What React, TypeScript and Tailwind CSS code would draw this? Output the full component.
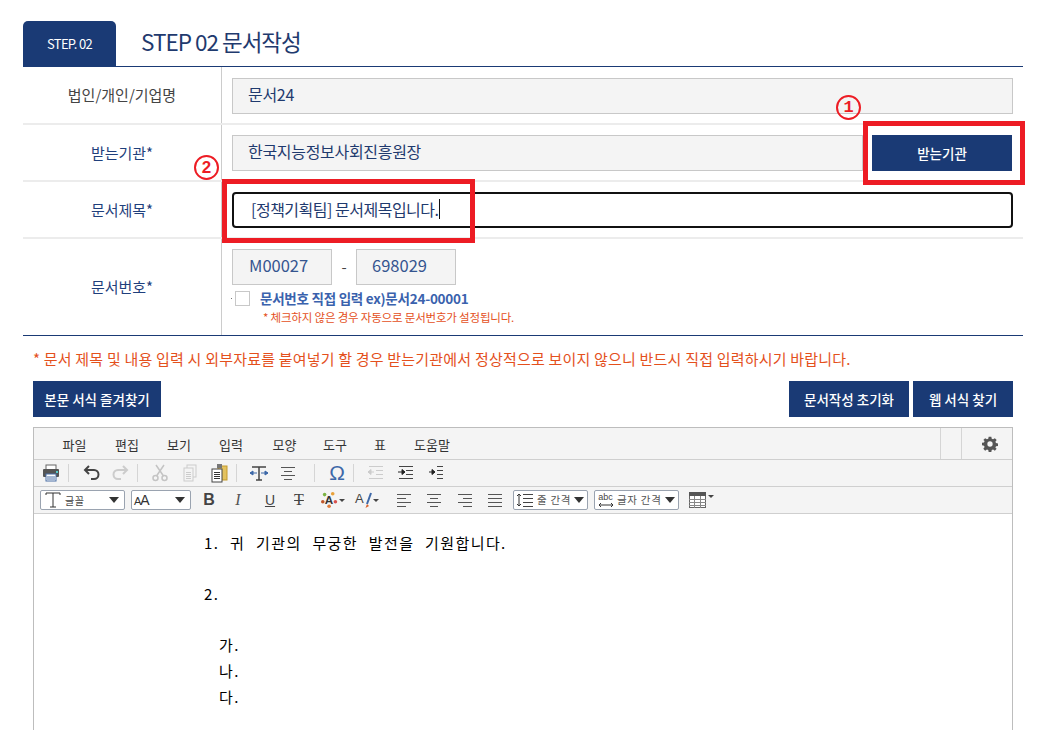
import React from "react";

const KR = "font-['Noto_Sans_CJK_KR','Noto_Sans',sans-serif]";

const Sep = () => <div className="w-px h-[18px] bg-[#d5d5d5] shrink-0" />;

function Ico({ cls, children }: { cls: string; children: React.ReactNode }) {
  return (
    <div className={`w-6 h-5 flex items-center justify-center shrink-0 ${cls}`}>
      <svg width="20" height="20" viewBox="0 0 20 20">{children}</svg>
    </div>
  );
}

const Lines = ({ c, l }: { c: string; l: number[][] }) => (
  <g stroke={c} strokeWidth="1" shapeRendering="crispEdges">
    {l.map((p, i) => (
      <line key={i} x1={p[0]} x2={p[1]} y1={p[2]} y2={p[2]} />
    ))}
  </g>
);

const Caret = ({ cls }: { cls: string }) => (
  <span className={`w-0 h-0 border-l-[5px] border-r-[5px] border-t-[6px] border-l-transparent border-r-transparent border-t-[#333] shrink-0 ${cls}`} />
);

function Field({ children, cls }: { children: React.ReactNode; cls: string }) {
  return (
    <div className={`h-9 flex items-center bg-[#f4f4f4] border border-[#c8c8c8] ${cls}`}>
      {children}
    </div>
  );
}

function Row({ label, h, children, blue, lc }: { label: string; h: string; children: React.ReactNode; blue?: boolean; lc?: string }) {
  return (
    <div className={`flex ${h}`}>
      <div className={`w-[198px] shrink-0 flex items-center justify-center text-[15px] ${lc ?? ""} ${blue ? "text-[#1f3f7c]" : "text-[#444]"}`}>{label}</div>
      <div className="flex-1 border-l border-[#cccccc] pl-[10px] pr-[10px]">{children}</div>
    </div>
  );
}

function NavyBtn({ children, cls }: { children: React.ReactNode; cls: string }) {
  return (
    <div className={`h-9 bg-[#1a3a75] text-white text-[13.5px] font-medium flex items-center justify-center ${cls}`}>{children}</div>
  );
}

const MENU: [string, string][] = [
  ["파일", "w-[53px]"],
  ["편집", "w-[52px]"],
  ["보기", "w-[52px]"],
  ["입력", "w-[52px]"],
  ["모양", "w-[55px]"],
  ["도구", "w-[46px]"],
  ["표", "w-[44px]"],
  ["도움말", "w-[60px]"],
];

export default function App() {
  return (
    <div className={`relative w-[1039px] h-[730px] overflow-hidden bg-white ${KR}`}>
      <div className="pl-[23px] pr-4 pt-[21px]">
        {/* heading */}
        <div className="flex items-stretch h-[46px] border-b-[1.5px] border-[#1a3a75]">
          <div className="w-[93px] bg-[#1a3a75] rounded-t-[5px] flex items-center justify-center text-white text-[13px] tracking-[-0.7px]">STEP. 02</div>
          <div className="ml-[25px] flex items-center text-[#1f3a6e] text-[22.5px] tracking-[-1px] pb-[3px]">STEP 02 문서작성</div>
        </div>

        {/* form */}
        <div className="border-b border-[#1a3a75]">
          <div className="border-b-2 border-[#ececec]">
            <Row label="법인/개인/기업명" h="h-[56px]">
              <div className="pt-[11px]"><Field cls="pl-[15px] pb-[4px] text-[16px] tracking-[-0.3px] text-[#1f3a6e]">문서24</Field></div>
            </Row>
          </div>
          <div className="border-b-2 border-[#ececec]">
            <Row label="받는기관*" h="h-[55px]" blue lc="pt-[2px]">
              <div className="pt-[10px] flex">
                <Field cls="pl-[15px] pb-[5px] w-[631px] text-[16px] tracking-[-0.3px] text-[#1f3a6e]">한국지능정보사회진흥원장</Field>
                <NavyBtn cls="ml-[9px] w-[140px]">받는기관</NavyBtn>
              </div>
            </Row>
          </div>
          <div className="border-b-2 border-[#ececec]">
            <Row label="문서제목*" h="h-[55px]" blue lc="pt-[2px]">
              <div className="pt-[10px]">
                <div className="h-9 flex items-center border-2 border-[#111] rounded-[4px] pl-[17px] pb-[3px] text-[16px] text-[#1f3a6e] tracking-[-0.5px]">
                  [정책기획팀] 문서제목입니다.<span className="w-px h-5 bg-[#111]" />
                </div>
              </div>
            </Row>
          </div>
          <Row label="문서번호*" h="h-[96px]" blue>
            <div className="pt-[10px] flex items-center">
              <Field cls="w-[100px] pl-[16px] pb-[3px] text-[16.5px] text-[#34558f]">M00027</Field>
              <span className="w-[24px] text-center text-[#444] text-[15px]">-</span>
              <Field cls="w-[100px] pl-[15px] pb-[3px] text-[16.5px] text-[#34558f]">698029</Field>
            </div>
            <div className="relative flex items-center mt-[6px] ml-[3px]">
              <div className="absolute left-[-4px] top-[7px] w-px h-px bg-[#777]" />
              <div className="w-[15px] h-[15px] border border-[#c8c8c8] bg-white" />
              <span className="ml-[10px] text-[13.5px] font-bold text-[#3a62ad] tracking-[-0.25px] leading-[15px]">문서번호 직접 입력 ex)문서24-00001</span>
            </div>
            <div className="ml-[31px] mt-[4px] text-[11.5px] leading-[15px] text-[#e4501c] tracking-[-0.19px]">* 체크하지 않은 경우 자동으로 문서번호가 설정됩니다.</div>
          </Row>
        </div>

        <div className="ml-[10px] mt-[12px] text-[15px] leading-[21px] text-[#e4501c] tracking-[0.2px] whitespace-nowrap">* 문서 제목 및 내용 입력 시 외부자료를 붙여넣기 할 경우 받는기관에서 정상적으로 보이지 않으니 반드시 직접 입력하시기 바랍니다.</div>

        <div className="ml-[10px] mr-[10px] mt-[12px] flex">
          <NavyBtn cls="w-[128px]">본문 서식 즐겨찾기</NavyBtn>
          <div className="flex-1" />
          <NavyBtn cls="w-[120px]">문서작성 초기화</NavyBtn>
          <NavyBtn cls="ml-1 w-[100px]">웹 서식 찾기</NavyBtn>
        </div>

        {/* editor */}
        <div className="ml-[10px] mr-[10px] mt-[10px] border border-[#bdbdbd] border-b-0 h-[320px]">
          <div className="h-[32px] bg-[#f4f4f4] border-b border-[#cfcfcf] flex items-center text-[13px] text-[#333]">
            <div className="flex pl-[14px] pt-[3px] flex-1">
              {MENU.map(([t, w]) => (
                <div key={t} className={`${w} text-center`}>{t}</div>
              ))}
            </div>
            <div className="w-[21px] h-full border-l border-[#d5d5d5]" />
            <div className="w-[51px] h-full border-l border-[#d5d5d5] pl-[6px] flex items-center justify-center">
              <svg width="16" height="16" viewBox="0 0 24 24" fill="#555">
                <path fillRule="evenodd" d="M10 1h4l.6 3.2 2 .8L19.300 3.200 22 6l-1.900 2.600.9 2 3 .5v3.800l-3 .6-.9 2L22 19.100 19.300 22l-2.700-1.900-2 .9-.6 3h-4l-.6-3-2-.9L4.700 22 2 19.100l1.900-2.600-.9-2-3-.6v-3.800l3-.5.9-2L2 6l2.700-2.800L7.400 5l2-.8zM12 8a4 4 0 100 8 4 4 0 000-8z" />
              </svg>
            </div>
          </div>

          <div className="h-[27px] bg-[#f4f4f4] border-b border-[#cfcfcf] flex items-center">
            <Ico cls="ml-[5px] mr-[5px]">
              <rect x="5" y="2" width="10" height="5" fill="#fff" stroke="#666" />
              <rect x="2" y="6" width="16" height="8" rx="1" fill="#555" />
              <rect x="15" y="8" width="2" height="2" fill="#5cc" />
              <rect x="5" y="11" width="10" height="7" fill="#fff" stroke="#4a6fa5" />
              <line x1="6" x2="14" y1="14" y2="14" stroke="#4a6fa5" />
              <line x1="6" x2="14" y1="16" y2="16" stroke="#4a6fa5" />
            </Ico>
            <Sep />
            <Ico cls="ml-[11px]">
              <path d="M7 3 3 7l4 4M3 7h9a4.500 4.500 0 010 9H9" fill="none" stroke="#444" strokeWidth="2" />
            </Ico>
            <Ico cls="ml-1">
              <path d="M13 3l4 4-4 4M17 7H8a4.500 4.500 0 000 9h3" fill="none" stroke="#ccc" strokeWidth="2" />
            </Ico>
            <div className="ml-[5px]"><Sep /></div>
            <Ico cls="ml-[10px]">
              <g fill="none" stroke="#c4c4c4" strokeWidth="1.500">
                <circle cx="5.500" cy="15" r="2.500" />
                <circle cx="14.500" cy="15" r="2.500" />
                <path d="M6.500 13 14 2M13.500 13 6 2" />
              </g>
            </Ico>
            <Ico cls="ml-[6px]">
              <rect x="7" y="2" width="9" height="12" fill="#f4f4f4" stroke="#ccc" />
              <rect x="4" y="5" width="9" height="13" fill="#f4f4f4" stroke="#ccc" />
              <Lines c="#ccc" l={[[6, 11, 9], [6, 11, 11], [6, 11, 13], [6, 11, 15]]} />
            </Ico>
            <Ico cls="ml-[5px]">
              <rect x="9" y="3" width="9" height="14" fill="#e3c25f" stroke="#c49a2c" />
              <rect x="8" y="1" width="5" height="4" fill="#777" />
              <rect x="3" y="6" width="10" height="13" fill="#fff" stroke="#444" />
              <Lines c="#333" l={[[5, 11, 9], [5, 11, 11], [5, 11, 13], [5, 11, 15]]} />
            </Ico>
            <div className="ml-[5px]"><Sep /></div>
            <Ico cls="ml-[10px]">
              <path d="M3 4h14M10 4v13M7 17h6" fill="none" stroke="#444" strokeWidth="1.500" />
              <path d="M1 10h7M1 10l3-2v4zM12 10h7M19 10l-3-2v4z" fill="#3d68a8" stroke="#3d68a8" />
            </Ico>
            <Ico cls="ml-[5px]">
              <Lines c="#555" l={[[3, 17, 4], [6, 14, 8], [3, 17, 12], [6, 14, 16]]} />
            </Ico>
            <div className="ml-[14px]"><Sep /></div>
            <div className="ml-[10px] w-6 h-5 flex items-center justify-center text-[21px] leading-5 text-[#3d68a8] font-['Liberation_Sans',sans-serif]">Ω</div>
            <div className="ml-1"><Sep /></div>
            <Ico cls="ml-[10px]">
              <Lines c="#ccc" l={[[3, 17, 3], [3, 17, 15], [10, 17, 7], [10, 17, 11]]} />
              <path d="M2 9h6M2 9l3-2.500v5z" stroke="#ccc" fill="#ccc" />
            </Ico>
            <Ico cls="ml-[6px]">
              <Lines c="#444" l={[[3, 17, 3], [3, 17, 15], [10, 17, 7], [10, 17, 11]]} />
              <path d="M2 9h6M9 9l-3-2.500v5z" stroke="#222" fill="#222" />
            </Ico>
            <Ico cls="ml-[6px]">
              <Lines c="#444" l={[[11, 17, 3], [11, 17, 7], [11, 17, 11], [11, 17, 15]]} />
              <path d="M3 9h5M9 9l-3-2.500v5z" stroke="#222" fill="#222" />
            </Ico>
          </div>

          <div className="h-[27px] bg-[#f4f4f4] border-b border-[#cfcfcf] flex items-center pl-[6px]">
            <div className="w-[85px] h-[20px] bg-white border border-[#9aa3b0] rounded-[2px] flex items-center">
              <svg className="ml-[4px] shrink-0" width="16" height="16" viewBox="0 0 16 16"><path d="M1 3V1h14v2M8 1v14M5 15h6" fill="none" stroke="#333" /></svg>
              <span className="ml-[4px] text-[10px] text-[#444] tracking-[0.5px]">글꼴</span>
              <Caret cls="ml-auto mr-[5px]" />
            </div>
            <div className="ml-[6px] w-[60px] h-[20px] bg-white border border-[#9aa3b0] rounded-[2px] flex items-center">
              <span className="ml-[2px] text-[#333] leading-none tracking-[-1px] font-['Liberation_Sans',sans-serif]"><span className="text-[11px]">A</span><span className="text-[14px]">A</span></span>
              <Caret cls="ml-auto mr-[5px]" />
            </div>
            <span className="ml-[10px] w-[16px] text-center text-[#444] text-[16px] font-bold leading-5 font-['Liberation_Sans',sans-serif]">B</span>
            <span className="ml-[13px] w-[16px] text-center text-[#555] text-[16px] italic leading-5 font-['Liberation_Serif',serif]">I</span>
            <span className="ml-[17px] w-[14px] text-center text-[#444] text-[14px] underline leading-5 font-['Liberation_Sans',sans-serif]">U</span>
            <span className="ml-[15px] w-[14px] text-center text-[#444] text-[16px] line-through leading-5 font-['Liberation_Serif',serif]">T</span>
            <div className="ml-[15px] w-[24px] h-5 flex items-center">
              <svg width="20" height="18" viewBox="0 0 20 18">
                <circle cx="4" cy="3" r="2" fill="#7cb342" /><circle cx="13" cy="2" r="2" fill="#e8a13a" /><circle cx="16" cy="11" r="2" fill="#d9534f" /><circle cx="2" cy="11" r="2" fill="#c0562a" /><circle cx="9" cy="16" r="2" fill="#e07b39" />
                <text x="9" y="14" textAnchor="middle" fontSize="13" fontWeight="700" fill="#333" fontFamily="Liberation Sans">A</text>
              </svg>
              <span className="w-0 h-0 border-l-[3px] border-r-[3px] border-t-[3px] border-l-transparent border-r-transparent border-t-[#444]" />
            </div>
            <div className="ml-[10px] w-[26px] h-5 flex items-center">
              <span className="text-[13px] text-[#444] leading-none -mt-1 font-['Liberation_Sans',sans-serif]">A</span>
              <svg width="9" height="18" viewBox="0 0 9 18"><path d="M7 2 3 13" stroke="#3d68a8" strokeWidth="2" /><path d="M3 13 1.500 17 5 15z" fill="#d9622b" /></svg>
              <span className="w-0 h-0 border-l-[3px] border-r-[3px] border-t-[3px] border-l-transparent border-r-transparent border-t-[#444]" />
            </div>
            <Ico cls="ml-[11px]"><Lines c="#555" l={[[3, 17, 4], [3, 12, 8], [3, 17, 12], [3, 12, 16]]} /></Ico>
            <Ico cls="ml-[6px]"><Lines c="#555" l={[[3, 17, 4], [6, 14, 8], [3, 17, 12], [6, 14, 16]]} /></Ico>
            <Ico cls="ml-[7px]"><Lines c="#555" l={[[3, 17, 4], [8, 17, 8], [3, 17, 12], [8, 17, 16]]} /></Ico>
            <Ico cls="ml-[6px]"><Lines c="#555" l={[[3, 17, 4], [3, 17, 8], [3, 17, 12], [3, 17, 16]]} /></Ico>
            <div className="ml-[6px] w-[75px] h-[20px] bg-white border border-[#9aa3b0] rounded-[2px] flex items-center">
              <svg className="ml-[2px] shrink-0" width="18" height="16" viewBox="0 0 18 16">
                <path d="M3 2v12M1 4l2-2 2 2M1 12l2 2 2-2" fill="none" stroke="#333" />
                <Lines c="#444" l={[[7, 17, 2], [7, 17, 6], [7, 17, 10], [7, 17, 14]]} />
              </svg>
              <span className="ml-[3px] text-[10.5px] text-[#555] tracking-[0.7px] whitespace-nowrap">줄 간격</span>
              <Caret cls="ml-auto mr-[3px]" />
            </div>
            <div className="ml-[6px] w-[85px] h-[20px] bg-white border border-[#9aa3b0] rounded-[2px] flex items-center">
              <div className="ml-[2px] w-[17px] flex flex-col items-center leading-none">
                <span className="text-[9px] leading-[9px] text-[#444] font-['Liberation_Sans',sans-serif]">abc</span>
                <svg width="16" height="6" viewBox="0 0 16 6"><path d="M1 3h14M3 1 1 3l2 2M13 1l2 2-2 2" fill="none" stroke="#333" /></svg>
              </div>
              <span className="ml-[3px] text-[10.5px] text-[#555] tracking-[0.7px] whitespace-nowrap">글자 간격</span>
              <Caret cls="ml-auto mr-[3px]" />
            </div>
            <div className="ml-[10px] flex items-center">
              <svg width="17" height="16" viewBox="0 0 17 16" shapeRendering="crispEdges">
                <rect x="0.500" y="0.500" width="16" height="15" fill="#fff" stroke="#666" />
                <rect x="0" y="0" width="17" height="4" fill="#555" />
                <path d="M0 7.500h17M0 10.500h17M0 13.500h17M5.500 4v12M11.500 4v12" stroke="#888" />
              </svg>
              <span className="ml-[2px] -mt-2 w-0 h-0 border-l-[3px] border-r-[3px] border-t-[3px] border-l-transparent border-r-transparent border-t-[#444]" />
            </div>
          </div>

          <div className="pl-[170px] pt-[16px] text-[15px] leading-[26px] text-black tracking-[1.4px] [word-spacing:6px]">
            <div>1. 귀 기관의 무궁한 발전을 기원합니다.</div>
            <div className="h-[25px]" />
            <div>2.</div>
            <div className="h-[25px]" />
            <div className="pl-[15px]">가.</div>
            <div className="pl-[15px]">나.</div>
            <div className="pl-[15px]">다.</div>
          </div>
        </div>
      </div>

      {/* annotations over the form */}
      <div className="absolute left-[863px] top-[121px] w-[162px] h-[64px] border-[5px] border-[#ed1c24]" />
      <div className="absolute left-[222px] top-[179px] w-[253px] h-[64px] border-[5px] border-[#ed1c24]" />
      <div className="absolute left-[836px] top-[95px] w-[25px] h-[25px] rounded-full border-2 border-[#ed1c24] flex items-center justify-center text-[#ed1c24] text-[17px] font-bold leading-none font-['Liberation_Mono',monospace]">1</div>
      <div className="absolute left-[194px] top-[155px] w-[25px] h-[25px] rounded-full border-2 border-[#ed1c24] flex items-center justify-center text-[#ed1c24] text-[17px] font-bold leading-none font-['Liberation_Sans',sans-serif]">2</div>
    </div>
  );
}
